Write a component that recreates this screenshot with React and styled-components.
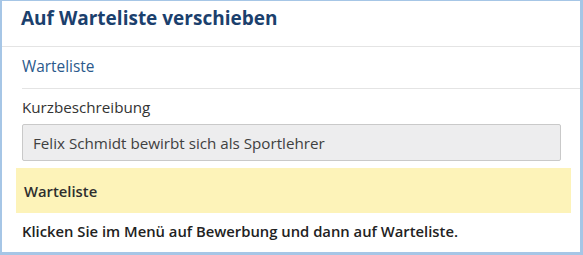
import React from "react";
import styled, { createGlobalStyle } from "styled-components";

const Global = createGlobalStyle`
  html, body { margin: 0; padding: 0; background: #fff; }
  body { font-family: "Open Sans", "Noto Sans", sans-serif; }
`;

const Frame = styled.div`
  box-sizing: border-box;
  width: 583px;
  height: 255px;
  border-style: solid;
  border-color: #a6c6e6;
  border-width: 1px 3px 3px 2px;
  background: #fff;
  display: flex;
  flex-direction: column;
`;

const Header = styled.div`
  box-sizing: border-box;
  height: 46px;
  border-bottom: 1px solid #e4e4e4;
  padding: 3px 0 0 19px;
  display: flex;
  align-items: flex-start;
`;

const Title = styled.h1`
  margin: 0;
  font-size: 19px;
  line-height: 28px;
  font-weight: 700;
  color: #1b406d;
`;

const Body = styled.div`
  padding: 0 0 0 20px;
  display: flex;
  flex-direction: column;
`;

const SectionLabel = styled.div`
  box-sizing: border-box;
  height: 42px;
  padding-bottom: 3px;
  border-bottom: 1px solid #e4e4e4;
  display: flex;
  align-items: center;
  font-size: 15.4px;
  color: #2b5a8c;
`;

const FieldLabel = styled.div`
  height: 35px;
  display: flex;
  align-items: center;
  font-size: 15.2px;
  color: #333;
`;

const ReadonlyInput = styled.div`
  box-sizing: border-box;
  width: 539px;
  height: 37px;
  background: #ededee;
  border: 1px solid #c9c9c9;
  border-radius: 2px;
  padding-left: 10px;
  display: flex;
  align-items: center;
  font-size: 15.2px;
  color: #404040;
`;

const Note = styled.div`
  margin: 7px 0 0 -6px;
  width: 555px;
  height: 45px;
  background: #fdf3b9;
  padding-left: 8px;
  box-sizing: border-box;
  display: flex;
  align-items: center;
  font-size: 14.8px;
  font-weight: 600;
  color: #2e2e2e;
`;

const Instruction = styled.div`
  height: 36px;
  display: flex;
  align-items: center;
  font-size: 14.8px;
  font-weight: 600;
  color: #222;
`;

export default function App() {
  return (
    <>
      <Global />
      <Frame>
        <Header>
          <Title>Auf Warteliste verschieben</Title>
        </Header>
        <Body>
          <SectionLabel>Warteliste</SectionLabel>
          <FieldLabel>Kurzbeschreibung</FieldLabel>
          <ReadonlyInput>Felix Schmidt bewirbt sich als Sportlehrer</ReadonlyInput>
          <Note>Warteliste</Note>
          <Instruction>Klicken Sie im Menü auf Bewerbung und dann auf Warteliste.</Instruction>
        </Body>
      </Frame>
    </>
  );
}
